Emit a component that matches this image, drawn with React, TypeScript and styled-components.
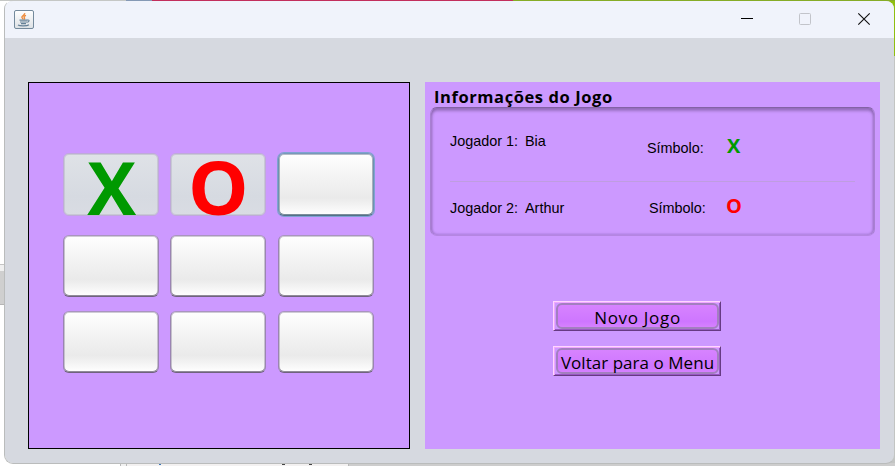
import React from "react";
import styled, { createGlobalStyle, css } from "styled-components";

const GlobalStyle = createGlobalStyle`
  * { box-sizing: border-box; }
  body { margin: 0; overflow: hidden; }
`;

const Desktop = styled.div`
  width: 895px;
  height: 466px;
  padding-left: 4px;
  background:
    linear-gradient(#3975b8, #3975b8) 159px 463px / 2px 2px no-repeat,
    linear-gradient(#444, #444) 282px 464px / 3px 1px no-repeat,
    linear-gradient(#444, #444) 309px 464px / 3px 1px no-repeat,
    linear-gradient(90deg, #fff 120px, #bbb 120px 121px, #f1f1f1 121px 126px, #bbb 126px 127px, #f3f1f1 127px 348px, #b8b8b8 348px 349px, #cdcdcd 349px) 0 463px / 895px 3px no-repeat,
    linear-gradient(90deg, #c5c7c5 126px, #8599b5 126px 152px, #c22e5c 152px 513px, #86ac26 513px) 0 0 / 895px 1px no-repeat,
    linear-gradient(#8fbf10 56px, #c3c5c3 56px) 880px 0 / 15px 463px no-repeat,
    linear-gradient(#fff 264px, #c4c4c4 264px 265px, #f0f0f0 265px 271px, #cfcfcf 271px 304px, #b5b5b5 304px 305px, #fff 305px);
`;

const Window = styled.main`
  width: 891px;
  height: 464px;
  border: 1px solid #babcbc;
  border-top-color: transparent;
  border-right-color: transparent;
  border-radius: 9px;
  background: #d6d9e0;
  background-clip: padding-box;
  overflow: hidden;
`;

const TitleBar = styled.header`
  height: 37px;
  display: flex;
  align-items: center;
  justify-content: space-between;
  padding: 0 24px 0 9px;
  background: #f0f3fb;
`;

const Controls = styled.div`
  display: flex;
  gap: 47px;
  padding-bottom: 1px;
  svg { display: block; overflow: visible; }
`;

const Content = styled.div`
  display: flex;
  gap: 15px;
  padding: 44px 0 0 23px;
`;

const Board = styled.section`
  width: 382px;
  height: 367px;
  border: 1px solid #000;
  background: #cc99ff;
  padding: 70px 0 0 34px;
  display: grid;
  grid-template-columns: repeat(3, 96px);
  grid-template-rows: 82px 76px 62px;
  column-gap: 11.4px;
  align-content: start;
`;

const Cell = styled.button<{ $played?: boolean; $focused?: boolean }>`
  width: 96px;
  height: 62px;
  padding: 0;
  display: flex;
  align-items: center;
  justify-content: center;
  border: 1px solid;
  border-radius: 6px;
  border-color: #a995bf #9a84b2 #6f637d;
  background: linear-gradient(#fff 0%, #f4f4f4 36%, #eaeaea 72%, #eeeeee 78%, #fff 100%);
  box-shadow: inset 0 -1px 0 #918b99, inset 0 1px 0 #d0ccd6, inset 1px 0 0 #c6c2cc, inset -1px 0 0 #c6c2cc;
  ${(p) => p.$played && css`
    height: 63px;
    border-color: #bfa9da;
    background: linear-gradient(#dfe2e7, #d6dae1 70%, #d9dce3);
    box-shadow: inset 0 0 0 1px #c8c9d4;
  `}
  ${(p) => p.$focused && css`
    height: 63px;
    border-color: #7799b8 #6e91b0 #527189;
    box-shadow: 0 0 0 1px #7ea2d2, inset 0 -1px 0 #7b8d9a, inset 0 1px 0 #b5bcc8, inset 1px 0 0 #a7b0bb, inset -1px 0 0 #a7b0bb;
  `}
`;

const Mark = styled.span<{ $color: string; $size: number; $scale?: number; $drop?: number; $shift?: number }>`
  display: block;
  font: 700 ${(p) => p.$size}px/1 "Open Sans", "Noto Sans", sans-serif;
  color: ${(p) => p.$color};
  transform: translate(${(p) => p.$shift ?? 0}px, ${(p) => p.$drop ?? 0}px) scaleX(${(p) => p.$scale ?? 1});
`;

const InfoPanel = styled.section`
  width: 455px;
  height: 367px;
  padding: 5px 5px 0;
  background: #cc99ff;
  display: flex;
  flex-direction: column;
`;

const Heading = styled.h1`
  margin: 0;
  height: 20px;
  padding-left: 4px;
  white-space: nowrap;
  font: 700 16.5px/20px "Open Sans", "Noto Sans", sans-serif;
  letter-spacing: 0.58px;
  color: #000;
`;

const Group = styled.div`
  width: 445px;
  height: 129px;
  border-radius: 7px;
  padding: 0 19px;
  border: 1px solid;
  border-color: #8362a5 #a880d2 #b586e2 #a880d2;
  box-shadow: inset 0 3px 3px rgba(80, 55, 105, .4), inset 2px 0 2px rgba(80, 55, 105, .16), inset -2px 0 2px rgba(80, 55, 105, .16), inset 0 -2px 2px rgba(80, 55, 105, .1);
`;

const Player = styled.div<{ $second: boolean }>`
  display: grid;
  grid-template-columns: 75px ${(p) => (p.$second ? 124 : 122)}px 78px 40px;
  align-items: start;
  height: ${(p) => (p.$second ? 53 : 74)}px;
  padding-top: ${(p) => (p.$second ? 16 : 23)}px;
  border-bottom: ${(p) => (p.$second ? "0" : "1px solid #bf9de0")};
`;

const Label = styled.span<{ $dy?: number }>`
  margin-top: ${(p) => p.$dy ?? 0}px;
  white-space: nowrap;
  font: 14.4px/20px "Liberation Sans", Arial, sans-serif;
  color: #000;
`;

const SymbolSlot = styled.div<{ $dx: number; $dy: number }>`
  margin: ${(p) => p.$dy}px 0 0 ${(p) => p.$dx}px;
`;

const Actions = styled.div`
  display: flex;
  flex-direction: column;
  align-items: center;
  gap: 15px;
  padding: 65px 31px 0 0;
`;

const ActionFrame = styled.button`
  width: 168px;
  height: 30px;
  padding: 1px 1px 1px 2px;
  display: flex;
  border: 1px solid;
  border-color: #ffd6ff #663a83 #663a83 #ffd6ff;
  background: #cc99ff;
  box-shadow: inset 1px 1px 0 #f0a6ff, inset -1px -1px 0 #9a57c4;
`;

const ActionFace = styled.span<{ $spacing: number }>`
  flex: 1;
  min-width: 0;
  height: 26px;
  border: 2px solid #a37fc0;
  border-radius: 6px;
  background: linear-gradient(#d783ff, #ce76ff 75%, #d681ff);
  display: flex;
  align-items: center;
  justify-content: center;
  white-space: nowrap;
  font: 400 17px/22px "Open Sans", "Noto Sans", sans-serif;
  letter-spacing: ${(p) => p.$spacing}px;
  padding-top: 4px;
  color: #000;
`;

const JavaIcon = () => (
  <svg width="20" height="19" viewBox="0 0 20 19" fill="none">
    <defs>
      <linearGradient id="tile" x2="0" y2="1">
        <stop stopColor="#fff" /><stop offset="1" stopColor="#dde1e5" />
      </linearGradient>
    </defs>
    <rect x=".5" y=".5" width="19" height="18" rx="1.5" fill="url(#tile)" stroke="#748a9c" />
    <path d="M10.7 3.2c.3 2-3.2 2.5-2.8 4.2.2.9 1.1 1.2 1.1 2M12 5.4c-1.8.6-2.5 1.4-1.6 2.4.5.6 0 1.2-.4 1.6" stroke="#ee8b3a" strokeWidth="1.4" />
    <path d="M5.5 10.1h8M6 12h7M7 13.6h5M13.5 10c2.3-.4 2.1 2-.7 2.3M4 15c1.8 1.2 9 1.2 11-.3" stroke="#658197" strokeWidth="1.1" />
  </svg>
);

const cells = ["X", "O", "", "", "", "", "", "", ""];
const colors: Record<string, string> = { X: "#009900", O: "#ff0000" };
const players = [
  { name: "Bia", symbol: "X", labelDy: 7, markDx: 2, markDy: 5 },
  { name: "Arthur", symbol: "O", labelDy: 0, markDx: -1, markDy: -2 },
];

export default function App() {
  return (
    <Desktop>
      <GlobalStyle />
      <Window>
        <TitleBar>
          <JavaIcon />
          <Controls>
            <svg width="12" height="12"><path d="M1 5.5h12" stroke="#000" /></svg>
            <svg width="12" height="12"><rect x=".5" y=".5" width="11" height="11" rx="1" fill="none" stroke="#c2c4ca" /></svg>
            <svg width="12" height="12"><path d="M.3.3l11.4 11.4M11.7.3.3 11.7" stroke="#111" strokeWidth="1.15" /></svg>
          </Controls>
        </TitleBar>
        <Content>
          <Board>
            {cells.map((value, i) => (
              <Cell key={i} $played={value !== ""} $focused={i === 2}>
                {value && (
                  <Mark
                    $color={colors[value]}
                    $size={74}
                    $scale={value === "X" ? 0.99 : 1.03}
                    $drop={2}
                    $shift={value === "X" ? 1 : 0}
                  >
                    {value}
                  </Mark>
                )}
              </Cell>
            ))}
          </Board>
          <InfoPanel>
            <Heading>Informações do Jogo</Heading>
            <Group>
              {players.map((p, i) => (
                <Player key={p.name} $second={i === 1}>
                  <Label>Jogador {i + 1}:</Label>
                  <Label>{p.name}</Label>
                  <Label $dy={p.labelDy}>Símbolo:</Label>
                  <SymbolSlot $dx={p.markDx} $dy={p.markDy}>
                    <Mark $color={colors[p.symbol]} $size={20}>{p.symbol}</Mark>
                  </SymbolSlot>
                </Player>
              ))}
            </Group>
            <Actions>
              <ActionFrame><ActionFace $spacing={0.7}>Novo Jogo</ActionFace></ActionFrame>
              <ActionFrame><ActionFace $spacing={0.04}>Voltar para o Menu</ActionFace></ActionFrame>
            </Actions>
          </InfoPanel>
        </Content>
      </Window>
    </Desktop>
  );
}
